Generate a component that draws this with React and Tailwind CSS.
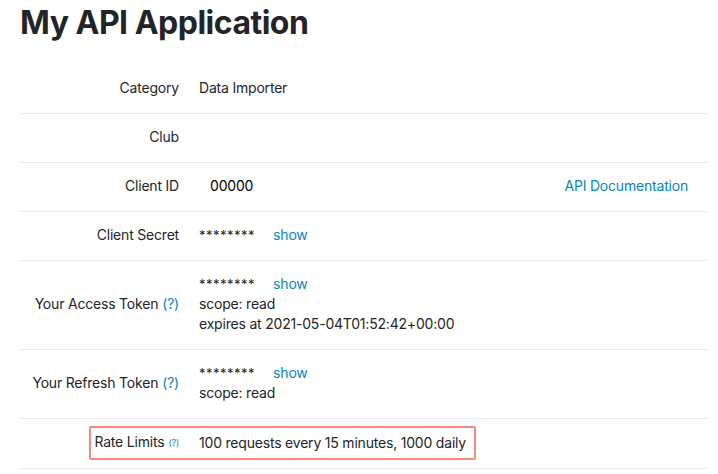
import { Fragment } from "react";

const link = "text-[#0b84b5]";

function Help({ small }) {
  return (
    <span className={`${link} ${small ? "text-[9px] ml-[4px] align-middle" : "ml-[4px]"}`}>(?)</span>
  );
}

function Masked() {
  return (
    <div className="flex items-center">
      <span className="text-[13px] tracking-[0.5px]">********</span>
      <a className={`${link} ml-[18px]`} href="#">show</a>
    </div>
  );
}

function Row({ label, children, extra }) {
  return (
    <div className="relative flex items-center border-b border-[#ececec] pt-[13px] pb-[15px]">
      <div className="w-[170px] shrink-0 pr-[10px] text-right">{label}</div>
      <div className="flex-1 pl-[10px]">{children}</div>
      {extra}
    </div>
  );
}

export default function App() {
  return (
    <div
      className="w-[718px] h-[474px] overflow-hidden bg-white text-[14px] leading-[20px] tracking-[-0.2px] text-[#242428]"
      style={{ fontFamily: "Inter, 'Liberation Sans', sans-serif" }}
    >
      <h1 className="pl-[20px] pt-[3px] text-[32px] leading-[40px] font-bold tracking-[-0.5px] text-[#242428]">
        My API Application
      </h1>

      <div className="mt-[22px] ml-[19px] mr-[10px]">
        <Row label="Category">Data Importer</Row>
        <Row label="Club">&nbsp;</Row>
        <Row label="Client ID">
          <div className="flex justify-between pr-[10px]">
            <span className="ml-[11px] text-black">00000</span>
            <a className={`${link} mr-[10px]`} href="#">API Documentation</a>
          </div>
        </Row>
        <Row label="Client Secret">
          <Masked />
        </Row>
        <Row
          label={
            <Fragment>
              Your Access Token<Help />
            </Fragment>
          }
        >
          <Masked />
          <div>scope: read</div>
          <div>expires at 2021-05-04T01:52:42+00:00</div>
        </Row>
        <Row
          label={
            <Fragment>
              Your Refresh Token<Help />
            </Fragment>
          }
        >
          <Masked />
          <div>scope: read</div>
        </Row>
        <Row
          label={
            <Fragment>
              Rate Limits<Help small />
            </Fragment>
          }
          extra={
            <div className="absolute left-[70px] top-[7px] w-[387px] h-[34px] border-2 border-[#f3897b] rounded-[2px] pointer-events-none" />
          }
        >
          100 requests every 15 minutes, 1000 daily
        </Row>
      </div>
    </div>
  );
}
